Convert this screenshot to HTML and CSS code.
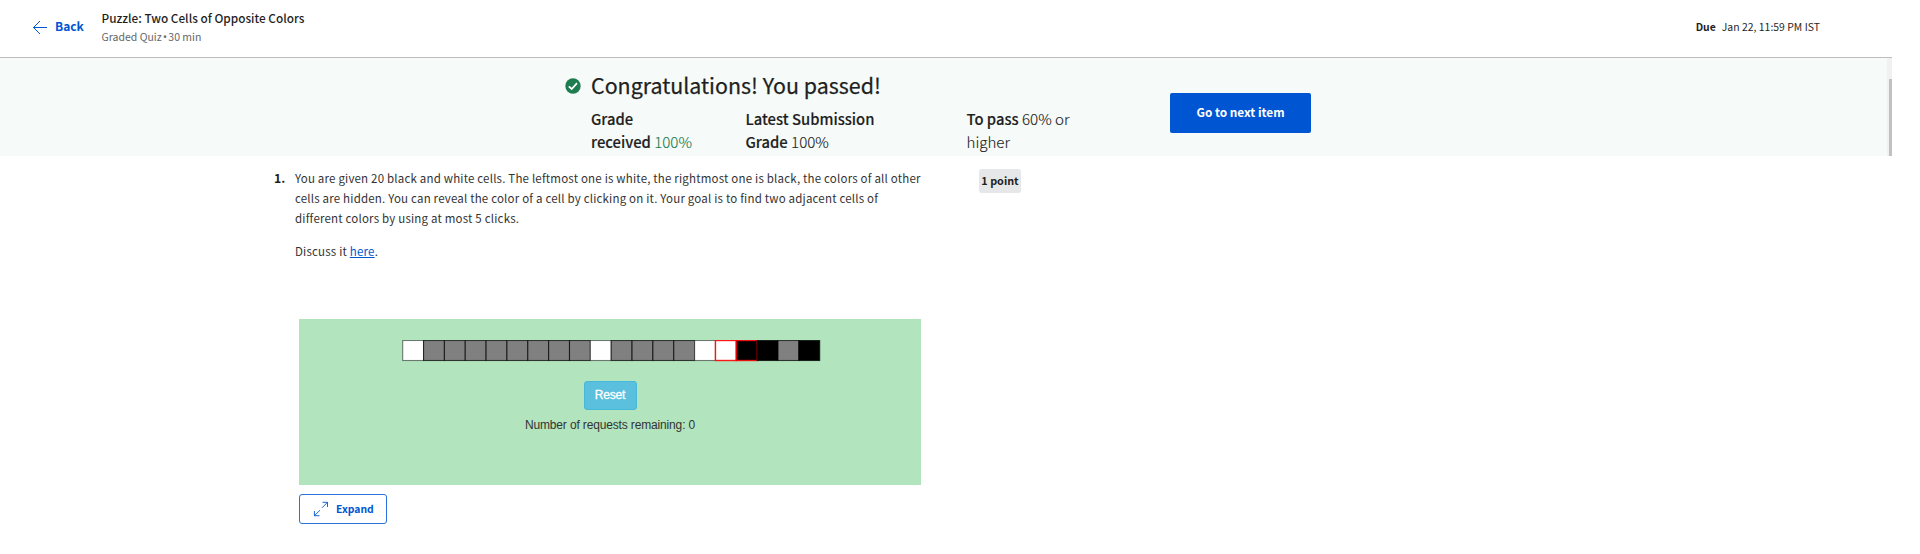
FILE: index.html
```html
<!DOCTYPE html>
<html lang="en">
<head>
<meta charset="utf-8">
<title>Puzzle: Two Cells of Opposite Colors</title>
<link rel="stylesheet" href="styles.css">
</head>
<body>
<header class="topbar">
  <a class="back" href="#">
    <svg class="back-icon" width="16" height="16" viewBox="0 0 16 16" fill="none" stroke="currentColor"><path d="M15 7.5H1.5M8 1L1.5 7.5L8 14"/></svg>
    <span>Back</span>
  </a>
  <div class="heading">
    <div class="title">Puzzle: Two Cells of Opposite Colors</div>
    <div class="subtitle">Graded Quiz <span class="bullet">•</span> 30 min</div>
  </div>
  <div class="due"><b>Due</b><span>Jan 22, 11:59 PM IST</span></div>
</header>
<section class="banner">
  <svg class="check" width="16" height="16" viewBox="0 0 16 16"><circle cx="8" cy="8" r="7.7" fill="#1d7c50"/><path d="M3.8 8.3L6.7 11L12 5.2" fill="none" stroke="#fff" stroke-width="1.8"/></svg>
  <div class="result">
    <h1 class="congrats">Congratulations! You passed!</h1>
    <div class="grades">
      <div class="grade received"><b>Grade<br>received</b> <span class="green">100%</span></div>
      <div class="grade latest"><b>Latest Submission<br>Grade</b> 100%</div>
      <div class="grade pass"><b>To pass</b> 60% or<br>higher</div>
    </div>
  </div>
  <button class="next">Go to next item</button>
  <div class="scroll-track"><div class="scroll-thumb"></div></div>
</section>
<main class="question">
  <div class="number">1.</div>
  <div class="content">
    <div class="prompt">
      <p>You are given 20 black and white cells. The leftmost one is white, the rightmost one is black, the colors of all other<br>cells are hidden. You can reveal the color of a cell by clicking on it. Your goal is to find two adjacent cells of<br>different colors by using at most 5 clicks.</p>
      <p>Discuss it <a class="link" href="#">here</a>.</p>
    </div>
    <div class="puzzle">
      <svg class="cells" width="420" height="22" viewBox="402 340 420 22" stroke="#000" stroke-opacity=".7" stroke-width="1.1">
        <g fill="#808080">
          <rect x="402.7" y="340.5" width="20.85" height="20" fill="#fff" stroke-opacity=".5"/>
          <rect x="423.55" y="340.5" width="20.85" height="20"/>
          <rect x="444.4" y="340.5" width="20.85" height="20"/>
          <rect x="465.25" y="340.5" width="20.85" height="20"/>
          <rect x="486.1" y="340.5" width="20.85" height="20"/>
          <rect x="506.95" y="340.5" width="20.85" height="20"/>
          <rect x="527.8" y="340.5" width="20.85" height="20"/>
          <rect x="548.65" y="340.5" width="20.85" height="20"/>
          <rect x="569.5" y="340.5" width="20.85" height="20"/>
          <rect x="590.35" y="340.5" width="20.85" height="20" fill="#fff" stroke-opacity=".5"/>
          <rect x="611.2" y="340.5" width="20.85" height="20"/>
          <rect x="632.05" y="340.5" width="20.85" height="20"/>
          <rect x="652.9" y="340.5" width="20.85" height="20"/>
          <rect x="673.75" y="340.5" width="20.85" height="20"/>
          <rect x="694.6" y="340.5" width="20.85" height="20" fill="#fff" stroke-opacity=".5"/>
          <rect x="715.45" y="340.5" width="20.85" height="20" fill="#fff" stroke="#f00" stroke-opacity=".9" stroke-width="1.4"/>
          <rect x="736.3" y="340.5" width="20.85" height="20" fill="#000" stroke="#f00" stroke-opacity=".85" stroke-width="1.4"/>
          <rect x="757.15" y="340.5" width="20.85" height="20" fill="#000"/>
          <rect x="778" y="340.5" width="20.85" height="20"/>
          <rect x="798.85" y="340.5" width="20.85" height="20" fill="#000"/>
        </g>
      </svg>
      <button class="reset">Reset</button>
      <div class="remaining">Number of requests remaining: 0</div>
    </div>
    <button class="expand">
      <svg width="16" height="16" viewBox="0 0 16 16" fill="none" stroke="currentColor" stroke-width=".9"><path d="M9.5 1.3H14.5V6M14.5 1.3L9 6.8M1.4 10V14.7H6.5M1.4 14.7L7 9.2"/></svg>
      <span>Expand</span>
    </button>
  </div>
  <div class="points">1 point</div>
</main>
</body>
</html>
```
FILE: styles.css
```css
* { box-sizing: border-box; }
body { margin: 0; background: #fff; color: #1f1f1f; font-family: "Noto Sans CJK SC", "Noto Sans", sans-serif; font-size: 11.5px; height: 554px; overflow: hidden; }
button { font: inherit; margin: 0; }
.topbar { width: 1892px; height: 58px; border-bottom: 1px solid #bdbdbd; display: flex; align-items: flex-start; padding-left: 32px; }
.back { display: flex; align-items: center; gap: 7px; width: 69.5px; height: 20px; margin-top: 16px; color: #0056d2; font-weight: 700; font-size: 12px; text-decoration: none; }
.back span { margin-top: -2px; }
.back-icon { display: block; margin-top: 3px; }
.title { margin-top: 9px; height: 19px; line-height: 18px; font-size: 11.8px; font-weight: 500; white-space: nowrap; }
.subtitle { height: 18px; line-height: 18px; font-size: 10.5px; color: #666; white-space: nowrap; }
.bullet { font-family: "Noto Sans", sans-serif; font-size: 10.5px; margin: 0 -1px; }
.due { margin: 18px 72px 0 auto; line-height: 18px; font-size: 10.4px; display: flex; gap: 6px; white-space: nowrap; }
.due span { letter-spacing: .03px; }
.banner { width: 1892px; height: 98px; background: #f6fbf9; display: flex; align-items: flex-start; overflow: hidden; padding-left: 565px; }
.check { margin-top: 20px; flex: none; }
.result { width: 579px; margin-left: 10px; flex: none; }
.congrats { margin: 12px 0 0; height: 30px; line-height: 30px; font-size: 21.4px; font-weight: 400; white-space: nowrap; -webkit-text-stroke: .25px; }
.grades { display: flex; margin-top: 7px; line-height: 23px; font-size: 15.1px; font-weight: 300; white-space: nowrap; -webkit-text-stroke: .15px; }
.grade b { font-weight: 500; font-size: 14.8px; }
.received { width: 154.5px; }
.latest { width: 221px; }
.green { color: #1d7c50; }
.next { width: 141px; height: 40px; margin-top: 35px; padding: 0 0 4px; border: 0; border-radius: 2px; background: #0056d2; color: #fff; font-weight: 700; font-size: 11.8px; }
.scroll-track { margin-left: auto; width: 5px; height: 98px; background: #f1f1f1; padding: 21px 0 0 2px; }
.scroll-thumb { height: 77px; background: #c1c1c1; }
.question { display: flex; align-items: flex-start; padding: 12px 0 0 274px; }
.number { width: 21px; line-height: 20px; font-weight: 700; font-size: 12.3px; }
.content { width: 626px; }
.prompt { height: 151px; line-height: 20px; white-space: nowrap; color: #333; letter-spacing: .19px; }
.prompt p { margin: 0 0 13px; }
.link { color: #0056d2; }
.puzzle { width: 622px; height: 166px; margin-left: 4px; background: #b2e4bd; display: flex; flex-direction: column; align-items: center; font-family: "Liberation Sans", Arial, sans-serif; color: #333; }
.cells { display: block; margin: 21px 0 0 4px; }
.reset { width: 53px; height: 29px; margin-top: 19px; padding: 0 0 2px; border: 1px solid #46b8da; border-radius: 3px; background: #5bc0de; color: #fff; font-size: 12px; letter-spacing: -.15px; -webkit-text-stroke: .3px; }
.remaining { margin-top: 8px; line-height: 14px; font-size: 12px; letter-spacing: -.15px; white-space: nowrap; }
.expand { width: 88px; height: 30px; margin: 10px 0 0 4px; margin-top: 9px; padding: 0 0 1px 13px; display: flex; align-items: center; gap: 7px; border: 1px solid #2a73da; border-radius: 3px; background: #fff; color: #0056d2; font-weight: 700; font-size: 10.4px; }
.expand span { margin-top: -1px; }
.points { margin: 1px 0 0 58px; width: 42px; height: 24px; line-height: 22px; border-radius: 3px; background: #e5e7e8; text-align: center; font-size: 10.8px; font-weight: 700; white-space: nowrap; }
```
